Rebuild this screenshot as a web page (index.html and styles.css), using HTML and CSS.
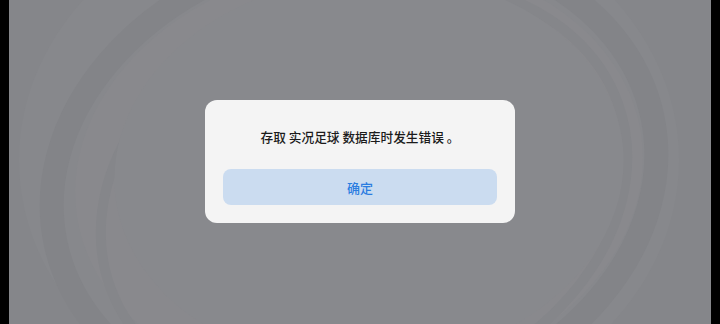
FILE: index.html
```html
<!DOCTYPE html>
<html lang="zh">
<head>
<meta charset="utf-8">
<link rel="stylesheet" href="styles.css">
</head>
<body>
<div class="screen">
  <svg class="swirl" width="702" height="324" viewBox="0 0 702 324" aria-hidden="true">
    <ellipse cx="340" cy="160" rx="330" ry="270" fill="#87888c"/>
    <ellipse cx="345" cy="180" rx="305" ry="235" fill="none" stroke="#838488" stroke-width="24" transform="rotate(-12 345 180)"/>
    <ellipse cx="350" cy="175" rx="285" ry="215" fill="#89898d" transform="rotate(-8 350 175)"/>
    <ellipse cx="355" cy="195" rx="270" ry="205" fill="none" stroke="#85868a" stroke-width="10" transform="rotate(-20 355 195)"/>
    <ellipse cx="360" cy="170" rx="255" ry="195" fill="#88898d" transform="rotate(-5 360 170)"/>
  </svg>
  <div class="dialog">
    <p class="message">存取 实况足球 数据库时发生错误 。</p>
    <button class="ok">确定</button>
  </div>
</div>
</body>
</html>
```
FILE: styles.css
```css
html, body {
  margin: 0;
  padding: 0;
  background: #000;
}
body {
  width: 720px;
  height: 324px;
  overflow: hidden;
}
.screen {
  position: relative;
  margin: 0 9px;
  width: 702px;
  height: 324px;
  background: #85868a;
  display: flex;
  justify-content: center;
  align-items: flex-start;
  overflow: hidden;
  font-family: "Noto Sans CJK SC", "Noto Sans", sans-serif;
}
.swirl {
  position: absolute;
  left: 0;
  top: 0;
}
.dialog {
  position: relative;
  margin-top: 100px;
  width: 310px;
  box-sizing: border-box;
  padding: 27px 18px 18px;
  background: #f4f4f4;
  border-radius: 12px;
  display: flex;
  flex-direction: column;
}
.message {
  margin: 0 0 22px;
  font-size: 12.7px;
  line-height: 20px;
  font-weight: 500;
  color: #1b1b1b;
  text-align: center;
}
.ok {
  height: 36px;
  border: none;
  border-radius: 8px;
  background: #cbdcf0;
  color: #2b7de0;
  font-family: inherit;
  font-size: 13px;
  font-weight: 500;
  padding: 0;
}
```
